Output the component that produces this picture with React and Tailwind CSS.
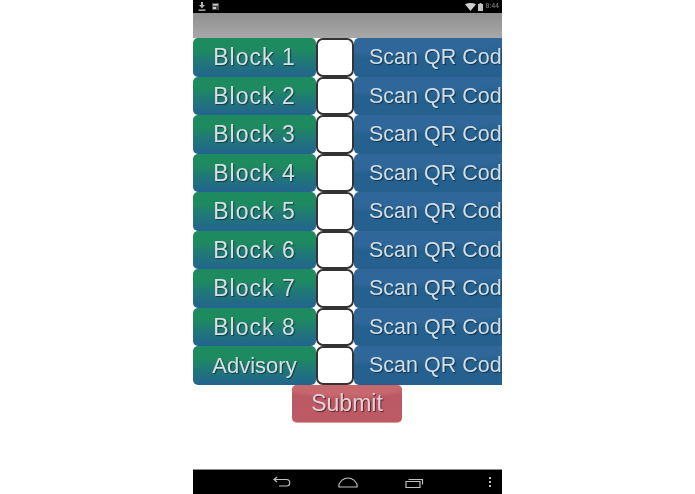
import React from 'react';

const rows = [
  { label: 'Block 1', text: 'text-[23px] tracking-[1px]' },
  { label: 'Block 2', text: 'text-[23px] tracking-[1px]' },
  { label: 'Block 3', text: 'text-[23px] tracking-[1px]' },
  { label: 'Block 4', text: 'text-[23px] tracking-[1px]' },
  { label: 'Block 5', text: 'text-[23px] tracking-[1px]' },
  { label: 'Block 6', text: 'text-[23px] tracking-[1px]' },
  { label: 'Block 7', text: 'text-[23px] tracking-[1px]' },
  { label: 'Block 8', text: 'text-[23px] tracking-[1px]' },
  { label: 'Advisory', text: 'text-[22px]' },
];

function StatusBar() {
  return (
    <div className="h-[13px] bg-black flex items-center justify-between pl-[5px] pr-[3px]">
      <div className="flex items-center gap-[6px]">
        <svg width="8" height="9" viewBox="0 0 8 9" fill="#b5b5b5">
          <path d="M3 0h2v3h2L4 6.2 1 3h2z" />
          <rect x="0.5" y="7.4" width="7" height="1.4" />
        </svg>
        <svg width="7" height="7" viewBox="0 0 7 7" fill="#8c8c8c">
          <path d="M0 0h7v7H0z" opacity="0.55" />
          <path d="M1 1h5v1.5H1zM1 4h3v2H1z" fill="#d0d0d0" />
        </svg>
      </div>
      <div className="flex items-center gap-[2px]">
        <svg width="11" height="8" viewBox="0 0 11 8" fill="#cfcfcf">
          <path d="M0 1.2C3.2-.4 7.8-.4 11 1.2L5.5 8z" />
        </svg>
        <svg width="5" height="8" viewBox="0 0 5 8" fill="#c4c4c4">
          <path d="M1.5 0h2v1H5v7H0V1h1.5z" />
        </svg>
        <span className="ml-[1px] text-[7px] leading-none text-[#8a8a8a] font-['Roboto',sans-serif]">8:44</span>
      </div>
    </div>
  );
}

function NavBar() {
  return (
    <div className="h-[25px] bg-black border-t border-[#8a8a8a] flex items-center pl-[80px] pr-[11px]">
      <svg width="18" height="12" viewBox="0 0 18 12" fill="none" stroke="#c0c0c0" strokeWidth="1.2">
        <path d="M1 3.5h12.5a3 3 0 0 1 0 6.5H6" />
        <path d="M4 1 1 3.5 4 6" />
      </svg>
      <svg className="ml-[47px]" width="20" height="11" viewBox="0 0 20 11" fill="none" stroke="#c0c0c0" strokeWidth="1.2">
        <path d="M1 10h18v-3c-2-3-4-6-9-6S3 4 1 7z" />
      </svg>
      <svg className="ml-[47px]" width="19" height="11" viewBox="0 0 19 11" fill="none" stroke="#c0c0c0" strokeWidth="1.2">
        <path d="M1 4.5h14v6H1z" />
        <path d="M3.5 2.5h14v5" />
      </svg>
      <div className="ml-auto flex flex-col gap-[2px]">
        <div className="w-[2px] h-[2px] bg-[#c0c0c0]" />
        <div className="w-[2px] h-[2px] bg-[#c0c0c0]" />
        <div className="w-[2px] h-[2px] bg-[#c0c0c0]" />
      </div>
    </div>
  );
}

function Row({ label, text }) {
  return (
    <div className="flex h-[38.5px]">
      <div className={`w-[123px] flex items-center justify-center rounded-[5px] bg-[linear-gradient(to_bottom,#1e8a5f_0%,#1e8a60_30%,#20757a_65%,#23648f_100%)] text-[#d3e2e0] [text-shadow:1px_1px_1px_#123c44] ${text}`}>
        {label}
      </div>
      <div className="w-[38px] rounded-[7px] border-[2.5px] border-[#333333] bg-white" />
      <div className="flex-1 flex items-center pl-[15px] overflow-hidden whitespace-nowrap rounded-l-[5px] bg-[radial-gradient(ellipse_170px_20px_at_20%_0%,#30679a_70%,transparent_100%),linear-gradient(to_bottom,#25628f,#25608e)] text-[21.5px] text-[#d3dfe6] [text-shadow:1px_1px_1px_#12324e]">
        Scan QR Code
      </div>
    </div>
  );
}

export default function App() {
  return (
    <div className="w-[695px] h-[494px] bg-white flex justify-center font-['Liberation_Sans',sans-serif] blur-[0.5px]">
      <div className="w-[309px] h-full flex flex-col">
        <StatusBar />
        <div className="h-[25px] bg-[linear-gradient(to_bottom,#8f8f8f,#a8a8a8)]" />
        <div className="flex flex-col">
          {rows.map((r) => (
            <Row key={r.label} label={r.label} text={r.text} />
          ))}
        </div>
        <div className="flex justify-center">
          <button className="mr-[1px] w-[110px] h-[38px] rounded-[5px] border-b border-[#e09aa0] bg-[radial-gradient(ellipse_80px_14px_at_50%_0%,#c7686f_70%,transparent_100%),linear-gradient(to_bottom,#bb5863,#bc5a65)] text-[23px] text-[#e3d3d6] [text-shadow:1px_1px_1px_#5a242b]">
            Submit
          </button>
        </div>
        <div className="flex-1" />
        <NavBar />
      </div>
    </div>
  );
}
